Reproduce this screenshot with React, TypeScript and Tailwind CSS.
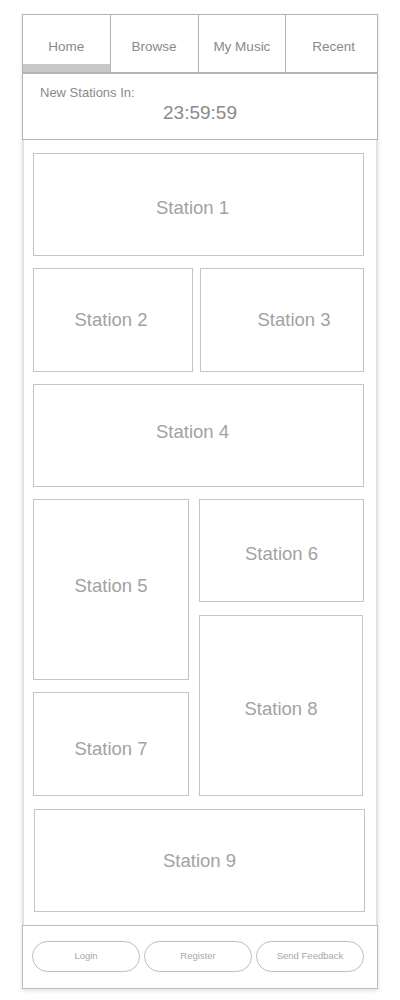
import React from 'react';

const tabs = ['Home', 'Browse', 'My Music', 'Recent'];

function Station({ label, className }: { label: string; className: string }) {
  return (
    <div
      className={`flex items-center justify-center border border-[#c4c4c4] text-[18.5px] text-[#a2a2a2] ${className}`}
    >
      {label}
    </div>
  );
}

function FooterButton({ label }: { label: string }) {
  return (
    <button className="flex h-[31px] w-[108px] items-center justify-center rounded-full border border-[#bdbdbd] text-[9.5px] text-[#a8a8a8]">
      {label}
    </button>
  );
}

export default function App() {
  return (
    <div
      className="min-h-[1000px] bg-white pl-[22px] pt-[14px]"
      style={{ fontFamily: '"Liberation Sans", Arial, sans-serif' }}
    >
      <div className="w-[356px] shadow-[0_2px_4px_rgba(0,0,0,0.12)]">
        {/* top: tabs + countdown */}
        <div className="border border-[#b4b4b4]">
          <div className="flex h-[59px] border-b-2 border-[#b4b4b4]">
            {tabs.map((t, i) => (
              <div
                key={t}
                className={`relative flex flex-1 justify-center pt-[22px] text-[13.5px] text-[#8a8a8a] ${
                  i < tabs.length - 1 ? 'border-r border-[#b4b4b4]' : ''
                } ${i === 3 ? 'pl-[4px]' : ''}`}
              >
                {t}
                {i === 0 && (
                  <div className="absolute bottom-0 left-0 right-0 h-[8px] bg-[#c8c8c8]" />
                )}
              </div>
            ))}
          </div>
          <div className="h-[65px] pl-[17px] pt-[11px]">
            <div className="text-[13px] leading-[15px] text-[#8a8a8a]">New Stations In:</div>
            <div className="mt-[2px] pr-[17px] text-center text-[19px] leading-[22px] text-[#8a8a8a]">
              23:59:59
            </div>
          </div>
        </div>

        {/* stations */}
        <div className="flex flex-col gap-[12px] border-x-2 border-[#e2e2e2] pb-[13px] pl-[9px] pr-[12px] pt-[13px]">
          <Station label="Station 1" className="h-[103px] w-[331px] pr-[12px] pt-[6px]" />
          <div className="flex gap-[7px]">
            <Station label="Station 2" className="h-[104px] w-[160px] pr-[4px]" />
            <Station label="Station 3" className="h-[104px] w-[164px] pl-[24px]" />
          </div>
          <Station label="Station 4" className="h-[103px] w-[331px] pb-[8px] pr-[12px]" />
          <div className="flex gap-[10px]">
            <div className="flex w-[156px] flex-col gap-[12px]">
              <Station label="Station 5" className="h-[181px] w-[156px] pb-[8px]" />
              <Station label="Station 7" className="h-[104px] w-[156px] pt-[9px]" />
            </div>
            <div className="flex w-[165px] flex-col gap-[13px]">
              <Station label="Station 6" className="h-[103px] w-[165px] pt-[6px]" />
              <Station label="Station 8" className="h-[181px] w-[164px] pt-[6px]" />
            </div>
          </div>
          <Station label="Station 9" className="ml-[1px] mt-[1px] h-[103px] w-[331px]" />
        </div>

        {/* footer */}
        <div className="flex h-[64px] items-start gap-[4px] border border-[#bcbcbc] pl-[9px] pt-[15px]">
          <FooterButton label="Login" />
          <FooterButton label="Register" />
          <FooterButton label="Send Feedback" />
        </div>
      </div>
    </div>
  );
}
